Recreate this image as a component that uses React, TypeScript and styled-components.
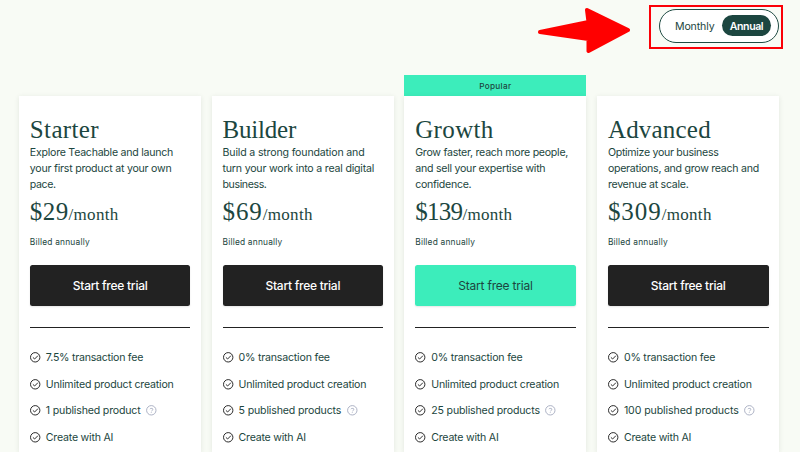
import React from "react";
import styled, { createGlobalStyle } from "styled-components";

const Global = createGlobalStyle`
  * { box-sizing: border-box; }
  html, body { margin: 0; padding: 0; }
  body {
    width: 800px; height: 452px; overflow: hidden;
    background: #f8fbf5; color: #1c4640;
    font-family: Inter, "Liberation Sans", sans-serif;
  }
  h2, p, ul { margin: 0; padding: 0; font-weight: 400; }
`;

const Page = styled.main`
  display: flex;
  flex-direction: column;
  height: 452px;
  overflow: hidden;
`;

const Toolbar = styled.header`
  display: flex;
  justify-content: flex-end;
  align-items: flex-start;
  height: 75px;
  flex: none;
  padding: 5px 17px 0 0;
`;

const Arrow = styled.svg`
  display: block;
  width: 94px;
  height: 48px;
  margin: 2px 17px 0 0;
`;

const Highlight = styled.div`
  width: 134px;
  height: 44px;
  padding: 2px 2px;
  border: 2px solid #fb0007;
  display: flex;
  justify-content: flex-end;
`;

const Toggle = styled.div`
  width: 120px;
  height: 34px;
  border: 1px solid #1f4b43;
  border-radius: 17px;
  background: #fff;
  display: flex;
  align-items: center;
  padding: 0 7px 1px 15px;
  justify-content: space-between;
`;

const Option = styled.button<{ $active?: boolean }>`
  width: ${(p) => (p.$active ? 49 : 41)}px;
  height: 21px;
  border: 0;
  padding: 0;
  border-radius: 11px;
  background: ${(p) => (p.$active ? "#1c4640" : "transparent")};
  color: ${(p) => (p.$active ? "#fff" : "#1c4640")};
  font: ${(p) => (p.$active ? 600 : 400)} 10.6px/21px Inter, sans-serif;
  padding-top: 1px;
  letter-spacing: ${(p) => (p.$active ? -0.45 : -0.15)}px;
  text-align: ${(p) => (p.$active ? "center" : "left")};
  white-space: nowrap;
`;

const Plans = styled.section`
  display: grid;
  grid-template-columns: repeat(4, 182.2px);
  column-gap: 10.5px;
  padding-left: 18.85px;
  flex: 1;
`;

const Column = styled.div`
  display: flex;
  flex-direction: column;
`;

const Ribbon = styled.div<{ $shown?: boolean }>`
  height: 21px;
  flex: none;
  background: ${(p) => (p.$shown ? "#3cedbb" : "transparent")};
  font-size: 8.2px;
  font-weight: 500;
  line-height: 22px;
  letter-spacing: 0.3px;
  text-align: center;
`;

const Card = styled.article`
  flex: 1;
  background: #fff;
  padding: 19px 10.6px 0 11px;
  box-shadow: 0 1px 5px rgba(40, 60, 40, 0.1);
`;

const Title = styled.h2<{ $ls: number }>`
  height: 30px;
  font: 400 25px/29px "Liberation Serif", serif;
  letter-spacing: ${(p) => p.$ls}px;
  white-space: nowrap;
`;

const Blurb = styled.p`
  height: 48px;
  font-size: 10.6px;
  line-height: 16px;
`;

const Line = styled.span<{ $ls: number }>`
  display: block;
  letter-spacing: ${(p) => p.$ls}px;
  white-space: nowrap;
`;

const Price = styled.div`
  display: flex;
  align-items: baseline;
  height: 39px;
  font: 400 25px/38px "Liberation Serif", serif;
  white-space: nowrap;
`;

const Period = styled.span`
  font-size: 17px;
  letter-spacing: 0.3px;
`;

const Amount = styled.span<{ $ls: number }>`
  letter-spacing: ${(p) => p.$ls}px;
`;

const Billing = styled.p`
  height: 33px;
  font-size: 8.4px;
  line-height: 20px;
  letter-spacing: 0.2px;
`;

const Trial = styled.button<{ $accent?: boolean }>`
  display: block;
  width: 100%;
  height: 41px;
  border: 0;
  border-radius: 2.5px;
  padding: 0;
  background: ${(p) => (p.$accent ? "#3cedbb" : "#222")};
  color: ${(p) => (p.$accent ? "#1c4640" : "#fff")};
  font: ${(p) => (p.$accent ? 400 : 500)} 12px/42px Inter, sans-serif;
  letter-spacing: ${(p) => (p.$accent ? -0.2 : -0.26)}px;
  box-shadow: 0 1px 2px rgba(0, 0, 0, 0.1);
`;

const Divider = styled.div`
  height: 1px;
  margin: 21px 0 16.3px;
  background: #222;
`;

const Features = styled.ul`
  list-style: none;
`;

const Feature = styled.li`
  display: flex;
  align-items: center;
  height: 26.67px;
  font-size: 10.6px;
  white-space: nowrap;
`;

const Check = styled.svg`
  width: 11px;
  height: 11px;
  flex: none;
  margin-right: 5px;
`;

const Help = styled.svg`
  width: 11px;
  height: 11px;
  flex: none;
  margin-left: 5.4px;
`;

type Txt = [string, number];
interface Plan {
  name: Txt;
  blurb: Txt[];
  price: Txt;
  fee: Txt;
  products: Txt;
  popular?: boolean;
}

const plans: Plan[] = [
  { name: ["Starter", 0.35], blurb: [["Explore Teachable and launch", -0.25], ["your first product at your own", -0.23], ["pace.", -0.4]], price: ["$29", 0.4], fee: ["7.5% transaction fee", -0.25], products: ["1 published product", -0.18] },
  { name: ["Builder", -0.2], blurb: [["Build a strong foundation and", -0.17], ["turn your work into a real digital", -0.2], ["business.", -0.4]], price: ["$69", 0.9], fee: ["0% transaction fee", -0.2], products: ["5 published products", -0.15] },
  { name: ["Growth", 0.35], blurb: [["Grow faster, reach more people,", -0.26], ["and sell your expertise with", -0.25], ["confidence.", -0.3]], price: ["$139", -0.7], fee: ["0% transaction fee", -0.2], products: ["25 published products", -0.17], popular: true },
  { name: ["Advanced", 0.2], blurb: [["Optimize your business", -0.3], ["operations, and grow reach and", -0.27], ["revenue at scale.", -0.28]], price: ["$309", 0.95], fee: ["0% transaction fee", -0.2], products: ["100 published products", -0.1] },
];

const CheckIcon = () => (
  <Check viewBox="0 0 11 11" fill="none" stroke="#222" strokeWidth="0.95">
    <circle cx="5.2" cy="5.3" r="4.7" />
    <path d="M2.9 5.4 4.6 7 8 3.6" />
  </Check>
);

const HelpIcon = () => (
  <Help viewBox="0 0 11 11" fill="none" stroke="#a9afc2" strokeWidth="0.95">
    <circle cx="5.3" cy="5.3" r="4.7" />
    <path d="M3.8 4.1C4.6 2.9 7.3 3.3 7 4.6 6.8 5.4 5.5 5.3 5.4 6.1M5.3 7v.7" />
  </Help>
);

export default function App() {
  return (
    <Page>
      <Global />
      <Toolbar>
        <Arrow viewBox="0 0 94 48">
          <path
            d="M2 25 50.5 15 49 3 90 23 50.5 44 50.5 32Z"
            fill="#ff0000"
            stroke="#ff0000"
            strokeWidth="4"
            strokeLinejoin="round"
          />
        </Arrow>
        <Highlight>
          <Toggle>
            <Option>Monthly</Option>
            <Option $active>Annual</Option>
          </Toggle>
        </Highlight>
      </Toolbar>
      <Plans>
        {plans.map((p) => (
          <Column key={p.name[0]}>
            <Ribbon $shown={p.popular}>{p.popular ? "Popular" : null}</Ribbon>
            <Card>
              <Title $ls={p.name[1]}>{p.name[0]}</Title>
              <Blurb>
                {p.blurb.map(([text, ls]) => (
                  <Line key={text} $ls={ls}>{text}</Line>
                ))}
              </Blurb>
              <Price>
                <Amount $ls={p.price[1]}>{p.price[0]}</Amount>
                <Period>/month</Period>
              </Price>
              <Billing>Billed annually</Billing>
              <Trial $accent={p.popular}>Start free trial</Trial>
              <Divider />
              <Features>
                <Feature><CheckIcon /><Line $ls={p.fee[1]}>{p.fee[0]}</Line></Feature>
                <Feature><CheckIcon /><Line $ls={-0.19}>Unlimited product creation</Line></Feature>
                <Feature><CheckIcon /><Line $ls={p.products[1]}>{p.products[0]}</Line><HelpIcon /></Feature>
                <Feature><CheckIcon /><Line $ls={-0.22}>Create with AI</Line></Feature>
              </Features>
            </Card>
          </Column>
        ))}
      </Plans>
    </Page>
  );
}
